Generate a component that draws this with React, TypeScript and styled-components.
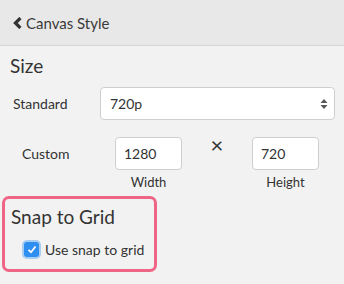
import styled, { createGlobalStyle } from 'styled-components'

const GlobalStyle = createGlobalStyle`
  html, body {
    margin: 0;
    padding: 0;
    background: #f2f2f2;
    font-family: Lato, "Open Sans", sans-serif;
    color: #333;
  }
`

const Panel = styled.div`
  width: 344px;
  height: 284px;
  background: #f2f2f2;
  overflow: hidden;
`

const Header = styled.div`
  height: 45px;
  display: flex;
  align-items: center;
  padding: 0 13px;
  background: #e8e8e8;
  border-bottom: 1px solid #d6d6d6;
  font-size: 15px;
  color: #3a3a3a;
  gap: 4px;
`

const Section = styled.div`
  padding: 8px 10px 0 10px;
`

const SectionTitle = styled.div`
  font-size: 19px;
  line-height: 24px;
  color: #333;
`

const Row = styled.div<{ $top: number }>`
  display: flex;
  align-items: flex-start;
  margin-top: ${({ $top }) => $top}px;
`

const Label = styled.div<{ $width: number; $indent?: number }>`
  width: ${({ $width }) => $width}px;
  padding-left: ${({ $indent }) => $indent ?? 0}px;
  font-size: 14px;
  line-height: 33px;
  color: #333;
  box-sizing: border-box;
`

const Select = styled.div`
  flex: 1;
  height: 33px;
  margin-right: -1px;
  box-sizing: border-box;
  background: #fff;
  border: 1px solid #cfcfcf;
  border-radius: 4px;
  display: flex;
  align-items: center;
  justify-content: space-between;
  padding: 0 6px 0 9px;
  font-size: 14px;
`

const DimField = styled.div`
  display: flex;
  flex-direction: column;
  align-items: center;
  gap: 4px;
`

const NumInput = styled.div`
  width: 67px;
  height: 33px;
  box-sizing: border-box;
  background: #fff;
  border: 1px solid #cfcfcf;
  border-radius: 4px;
  display: flex;
  align-items: center;
  padding-left: 8px;
  font-size: 14px;
`

const Caption = styled.div`
  font-size: 13px;
  line-height: 16px;
  color: #333;
`

const Times = styled.div`
  width: 70px;
  text-align: center;
  font-size: 22px;
  line-height: 22px;
  color: #333;
  margin-top: -3px;
`

const Highlight = styled.div`
  margin: 6px 0 0 2px;
  width: 155px;
  height: 76px;
  box-sizing: border-box;
  border: 3px solid #ef6586;
  border-radius: 7px;
  padding: 6px 0 0 6px;
`

const CheckRow = styled.label`
  display: flex;
  align-items: center;
  gap: 6px;
  margin: 12px 0 0 13px;
  font-size: 14px;
  color: #333;
`

const Check = styled.span`
  width: 15px;
  height: 15px;
  border-radius: 3px;
  background: #2f8ff0;
  box-shadow: 0 0 0 2px rgba(80, 160, 240, 0.45);
  display: flex;
  align-items: center;
  justify-content: center;
`

export default function App() {
  return (
    <>
      <GlobalStyle />
      <Panel>
        <Header>
          <svg width="9" height="12" viewBox="0 0 9 12">
            <path d="M7.4 1 L2.4 6 L7.4 11" fill="none" stroke="#333" strokeWidth="3.2" />
          </svg>
          Canvas Style
        </Header>
        <Section>
          <SectionTitle>Size</SectionTitle>
          <Row $top={9}>
            <Label $width={90} $indent={3}>Standard</Label>
            <Select>
              720p
              <svg width="8" height="12" viewBox="0 0 8 12">
                <path d="M4 1 L7.5 5 H0.5 Z M4 11 L7.5 7 H0.5 Z" fill="#555" />
              </svg>
            </Select>
          </Row>
          <Row $top={17}>
            <Label $width={105} $indent={12}>Custom</Label>
            <DimField>
              <NumInput>1280</NumInput>
              <Caption>Width</Caption>
            </DimField>
            <Times>×</Times>
            <DimField>
              <NumInput>720</NumInput>
              <Caption>Height</Caption>
            </DimField>
          </Row>
        </Section>
        <Highlight>
          <SectionTitle>Snap to Grid</SectionTitle>
          <CheckRow>
            <Check>
              <svg width="10" height="9" viewBox="0 0 10 9">
                <path d="M1.5 4.8 L4 7.2 L8.5 1.5" fill="none" stroke="#fff" strokeWidth="1.8" />
              </svg>
            </Check>
            Use snap to grid
          </CheckRow>
        </Highlight>
      </Panel>
    </>
  )
}
